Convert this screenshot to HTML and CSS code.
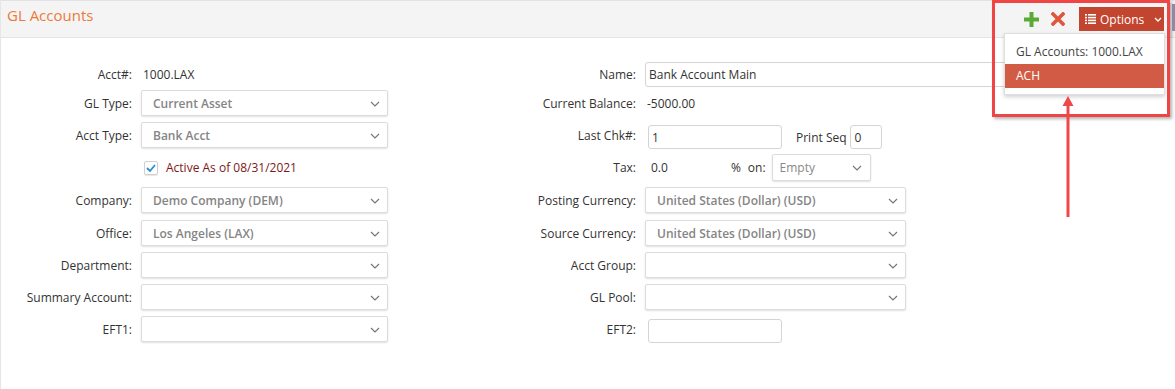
FILE: index.html
```html
<!DOCTYPE html>
<html lang="en">
<head>
    <meta charset="UTF-8">
    <title>GL Accounts</title>
    <link rel="stylesheet" href="styles.css">
</head>
<body>
    <div class="panel">
        <div class="panel-head">
            <h1 class="title">GL Accounts</h1>
            <div class="toolbar">
                <svg class="tool-icon" width="15" height="15" viewBox="0 0 15 15"><path d="M5.5 0h4v5.5H15v4H9.5V15h-4V9.5H0v-4h5.5z" fill="#5aaa36"/></svg>
                <svg class="tool-icon" width="14" height="14" viewBox="0 0 14 14"><path d="M2 2l10 10M12 2L2 12" stroke="#e2553d" stroke-width="3.6" stroke-linecap="square"/></svg>
                <div class="btn-options">
                    <svg width="11" height="10" viewBox="0 0 11 10"><g fill="#fff"><rect x="0" y="0" width="2" height="1.6"/><rect x="3" y="0" width="8" height="1.6"/><rect x="0" y="2.8" width="2" height="1.6"/><rect x="3" y="2.8" width="8" height="1.6"/><rect x="0" y="5.6" width="2" height="1.6"/><rect x="3" y="5.6" width="8" height="1.6"/><rect x="0" y="8.4" width="2" height="1.6"/><rect x="3" y="8.4" width="8" height="1.6"/></g></svg>
                    <span>Options</span>
                    <svg class="caret" width="8" height="5" viewBox="0 0 8 5"><path d="M1 1l3 3 3-3" stroke="#fff" stroke-width="1.3" fill="none"/></svg>
                </div>
            </div>
        </div>

        <div class="form">
            <!-- row 1 -->
            <div class="cell label">Acct#:</div>
            <div class="cell value">1000.LAX</div>
            <div class="cell label">Name:</div>
            <div class="cell"><div class="input input-name">Bank Account Main</div></div>

            <!-- row 2 -->
            <div class="cell label">GL Type:</div>
            <div class="cell"><div class="select">Current Asset<svg class="chev" width="10" height="6" viewBox="0 0 10 6"><path d="M1 1l4 4 4-4" stroke="#777" stroke-width="1.2" fill="none"/></svg></div></div>
            <div class="cell label">Current Balance:</div>
            <div class="cell value">-5000.00</div>

            <!-- row 3 -->
            <div class="cell label">Acct Type:</div>
            <div class="cell"><div class="select">Bank Acct<svg class="chev" width="10" height="6" viewBox="0 0 10 6"><path d="M1 1l4 4 4-4" stroke="#777" stroke-width="1.2" fill="none"/></svg></div></div>
            <div class="cell label">Last Chk#:</div>
            <div class="cell">
                <div class="input input-short">1</div>
                <span class="inline-label">Print Seq</span>
                <div class="input input-tiny">0</div>
            </div>

            <!-- row 4 -->
            <div class="cell cell-tall"></div>
            <div class="cell cell-tall">
                <span class="checkbox"><svg width="10" height="8" viewBox="0 0 10 8"><path d="M1 4l3 3 5-6" stroke="#2b8ed3" stroke-width="1.8" fill="none"/></svg></span>
                <span class="active-text">Active As of 08/31/2021</span>
            </div>
            <div class="cell cell-tall label">Tax:</div>
            <div class="cell cell-tall">
                <span class="tax-value">0.0</span>
                <span class="pct">%</span>
                <span class="on">on:</span>
                <div class="select select-small">Empty<svg class="chev" width="10" height="6" viewBox="0 0 10 6"><path d="M1 1l4 4 4-4" stroke="#777" stroke-width="1.2" fill="none"/></svg></div>
            </div>

            <!-- row 5 -->
            <div class="cell label">Company:</div>
            <div class="cell"><div class="select">Demo Company (DEM)<svg class="chev" width="10" height="6" viewBox="0 0 10 6"><path d="M1 1l4 4 4-4" stroke="#777" stroke-width="1.2" fill="none"/></svg></div></div>
            <div class="cell label">Posting Currency:</div>
            <div class="cell"><div class="select select-wide">United States (Dollar) (USD)<svg class="chev" width="10" height="6" viewBox="0 0 10 6"><path d="M1 1l4 4 4-4" stroke="#777" stroke-width="1.2" fill="none"/></svg></div></div>

            <!-- row 6 -->
            <div class="cell label">Office:</div>
            <div class="cell"><div class="select">Los Angeles (LAX)<svg class="chev" width="10" height="6" viewBox="0 0 10 6"><path d="M1 1l4 4 4-4" stroke="#777" stroke-width="1.2" fill="none"/></svg></div></div>
            <div class="cell label">Source Currency:</div>
            <div class="cell"><div class="select select-wide">United States (Dollar) (USD)<svg class="chev" width="10" height="6" viewBox="0 0 10 6"><path d="M1 1l4 4 4-4" stroke="#777" stroke-width="1.2" fill="none"/></svg></div></div>

            <!-- row 7 -->
            <div class="cell label">Department:</div>
            <div class="cell"><div class="select"><svg class="chev" width="10" height="6" viewBox="0 0 10 6"><path d="M1 1l4 4 4-4" stroke="#777" stroke-width="1.2" fill="none"/></svg></div></div>
            <div class="cell label">Acct Group:</div>
            <div class="cell"><div class="select select-wide"><svg class="chev" width="10" height="6" viewBox="0 0 10 6"><path d="M1 1l4 4 4-4" stroke="#777" stroke-width="1.2" fill="none"/></svg></div></div>

            <!-- row 8 -->
            <div class="cell label">Summary Account:</div>
            <div class="cell"><div class="select"><svg class="chev" width="10" height="6" viewBox="0 0 10 6"><path d="M1 1l4 4 4-4" stroke="#777" stroke-width="1.2" fill="none"/></svg></div></div>
            <div class="cell label">GL Pool:</div>
            <div class="cell"><div class="select select-wide"><svg class="chev" width="10" height="6" viewBox="0 0 10 6"><path d="M1 1l4 4 4-4" stroke="#777" stroke-width="1.2" fill="none"/></svg></div></div>

            <!-- row 9 -->
            <div class="cell label">EFT1:</div>
            <div class="cell"><div class="select"><svg class="chev" width="10" height="6" viewBox="0 0 10 6"><path d="M1 1l4 4 4-4" stroke="#777" stroke-width="1.2" fill="none"/></svg></div></div>
            <div class="cell label">EFT2:</div>
            <div class="cell"><div class="input input-short"></div></div>
        </div>

        <!-- options dropdown -->
        <ul class="menu">
            <li>GL Accounts: 1000.LAX</li>
            <li class="active">ACH</li>
        </ul>

        <!-- annotation -->
        <div class="callout"></div>
        <svg class="arrow" width="16" height="124" viewBox="0 0 16 124">
            <path d="M8 10V122" stroke="#f04848" stroke-width="3"/>
            <path d="M2.5 11L8 1l5.5 10z" fill="#f04848"/>
        </svg>
        <div class="edge"></div>
    </div>
</body>
</html>
```

FILE: styles.css
```css
* {
    margin: 0;
    padding: 0;
    box-sizing: border-box;
}

body {
    font-family: 'Open Sans', 'DejaVu Sans', sans-serif;
    font-size: 12px;
    color: #333;
    background: #fff;
}

.panel {
    position: relative;
    width: 1175px;
    height: 389px;
    border-left: 1px solid #e6e6e6;
    overflow: hidden;
}

.panel-head {
    height: 38px;
    background: #f4f4f4;
    border-top: 1px solid #e2e2e2;
    border-bottom: 1px solid #e4e4e4;
    display: flex;
    justify-content: space-between;
    align-items: flex-start;
    padding-right: 11px;
}

.title {
    font-size: 15px;
    font-weight: 400;
    color: #ec7a3a;
    padding: 4px 0 0 6px;
}

.toolbar {
    display: flex;
    align-items: center;
    margin-top: 6px;
}

.tool-icon {
    margin-right: 12px;
}

.tool-icon + .tool-icon {
    margin-right: 14px;
}

.btn-options {
    display: flex;
    align-items: center;
    width: 85px;
    height: 24px;
    padding-left: 6px;
    background: #c2452f;
    color: #fff;
    font-size: 12px;
}

.btn-options span {
    margin-left: 4px;
}

.btn-options .caret {
    margin-left: 10px;
}

.form {
    display: grid;
    grid-template-columns: 140px 247px 257px 1fr;
    grid-template-rows: 29px 32px 32px 33px 33px 32px 32px 32px 32px;
    padding-top: 23px;
}

.cell {
    height: 26px;
    display: flex;
    align-items: center;
}

.cell-tall {
    height: 27px;
}

.label {
    justify-content: flex-end;
    padding-right: 9px;
}

.value {
    padding-left: 2px;
}

.input {
    height: 25px;
    border: 1px solid #d4d4d4;
    border-radius: 3px;
    padding-left: 3px;
    display: flex;
    align-items: center;
    background: #fff;
}

.input-name {
    width: 405px;
}

.input-short {
    width: 134px;
    height: 24px;
    margin: 4px 0 0 3px;
}

.input-tiny {
    width: 32px;
    height: 24px;
    margin: 4px 0 0 3px;
    padding-left: 4px;
}

.inline-label {
    margin: 4px 0 0 14px;
}

.select {
    position: relative;
    width: 248px;
    height: 26px;
    border: 1px solid #dcdcdc;
    border-radius: 2px;
    box-shadow: 0 1px 2px rgba(0, 0, 0, 0.12);
    padding-left: 11px;
    display: flex;
    align-items: center;
    color: #858585;
    font-weight: 600;
    background: #fff;
}

.select-wide {
    width: 261px;
}

.select-small {
    width: 99px;
    height: 27px;
    padding-left: 7px;
    font-weight: 400;
    color: #888;
}

.chev {
    position: absolute;
    right: 7px;
    top: 10px;
}

.select-small .chev {
    right: 8px;
}

.checkbox {
    width: 14px;
    height: 14px;
    margin-left: 3px;
    border: 1px solid #cfcfcf;
    border-radius: 2px;
    box-shadow: 0 1px 1px rgba(0, 0, 0, 0.1);
    display: flex;
    align-items: center;
    justify-content: center;
}

.active-text {
    margin-left: 8px;
    color: #7d1818;
}

.tax-value {
    margin-left: 6px;
}

.pct {
    margin-left: 63px;
}

.on {
    margin-left: 7px;
}

.on + .select {
    margin-left: 6px;
}

.menu {
    position: absolute;
    left: 1003px;
    top: 33px;
    width: 161px;
    list-style: none;
    background: #fff;
    border: 1px solid #dedede;
    box-shadow: 0 2px 4px rgba(0, 0, 0, 0.18);
    padding: 6px 0 6px;
}

.menu li {
    height: 24px;
    line-height: 24px;
    padding-left: 11px;
    color: #444;
}

.menu li.active {
    background: #d25b45;
    color: #fff;
}

.callout {
    position: absolute;
    left: 991px;
    top: 0;
    width: 178px;
    height: 117px;
    border: 3px solid #f04545;
    box-shadow: 2px 2px 3px rgba(0, 0, 0, 0.3);
}

.arrow {
    position: absolute;
    left: 1059px;
    top: 95px;
}

.edge {
    position: absolute;
    left: 1171px;
    top: 4px;
    width: 3px;
    height: 27px;
    background: #8e8aa6;
}
```
